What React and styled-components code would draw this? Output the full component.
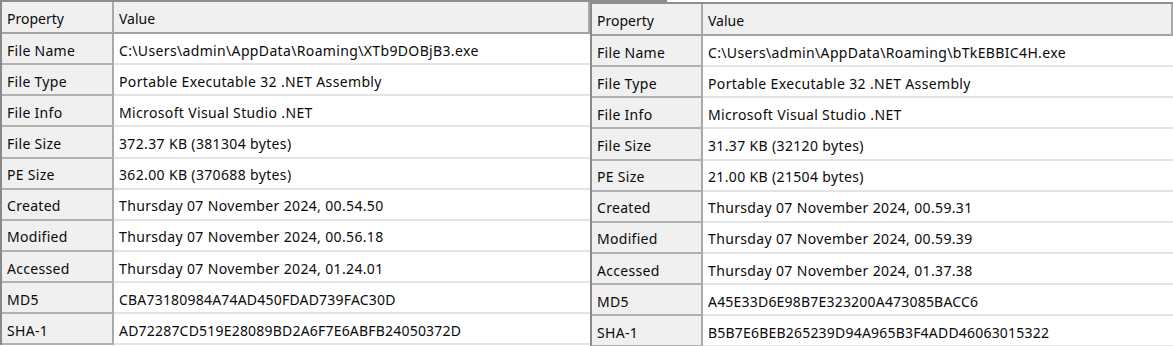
import React from "react";
import styled, { createGlobalStyle } from "styled-components";

const Global = createGlobalStyle`
  html, body { margin: 0; padding: 0; background: #ffffff; }
  body { width: 1173px; height: 346px; overflow: hidden; }
`;

const Page = styled.div`
  width: 1173px;
  height: 346px;
  display: flex;
  flex-direction: column;
  font-family: "Noto Sans", "Open Sans", sans-serif;
  font-size: 14px;
  letter-spacing: 0.3px;
  color: #0a0a0a;
`;

const TopEdge = styled.div`
  width: 667px;
  height: 2px;
  flex: none;
  background: #8e8e8e;
`;

const Panels = styled.div`
  display: flex;
  align-items: flex-start;
  margin-top: -2px;
`;

const Panel = styled.div`
  width: ${(p) => p.$width}px;
  flex: none;
  margin-top: ${(p) => p.$offset}px;
  border-top: 2px solid #8e8e8e;
  border-left: 2px solid #8a8a8a;
  box-sizing: border-box;
  display: grid;
  grid-template-columns: ${(p) => p.$propWidth}px 1fr;
`;

const HeadCell = styled.div`
  height: 32px;
  box-sizing: border-box;
  background: #f0f0f0;
  border-bottom: 2px solid #a3a3a3;
  border-right: 2px solid #a9a9a9;
  display: flex;
  align-items: center;
  padding: 2px 0 0 5px;
  letter-spacing: 0;
  white-space: nowrap;
`;

const PropCell = styled.div`
  height: 31.15px;
  box-sizing: border-box;
  background: #f0f0f0;
  border-bottom: 2px solid #b0b0b0;
  border-right: 2px solid #a9a9a9;
  display: flex;
  align-items: center;
  padding: 3px 0 0 5px;
  white-space: nowrap;
`;

const ValueCell = styled.div`
  height: 31.15px;
  box-sizing: border-box;
  background: #ffffff;
  border-bottom: 2px solid #e4e4e4;
  display: flex;
  align-items: center;
  padding: 3px 0 0 5px;
  white-space: nowrap;
  overflow: hidden;
  letter-spacing: ${(p) => (p.$hash ? "0.2px" : "0.35px")};
`;

const left = [
  ["File Name", "C:\\Users\\admin\\AppData\\Roaming\\XTb9DOBjB3.exe"],
  ["File Type", "Portable Executable 32 .NET Assembly"],
  ["File Info", "Microsoft Visual Studio .NET"],
  ["File Size", "372.37 KB (381304 bytes)"],
  ["PE Size", "362.00 KB (370688 bytes)"],
  ["Created", "Thursday 07 November 2024, 00.54.50"],
  ["Modified", "Thursday 07 November 2024, 00.56.18"],
  ["Accessed", "Thursday 07 November 2024, 01.24.01"],
  ["MD5", "CBA73180984A74AD450FDAD739FAC30D", true],
  ["SHA-1", "AD72287CD519E28089BD2A6F7E6ABFB24050372D", true],
];

const right = [
  ["File Name", "C:\\Users\\admin\\AppData\\Roaming\\bTkEBBIC4H.exe"],
  ["File Type", "Portable Executable 32 .NET Assembly"],
  ["File Info", "Microsoft Visual Studio .NET"],
  ["File Size", "31.37 KB (32120 bytes)"],
  ["PE Size", "21.00 KB (21504 bytes)"],
  ["Created", "Thursday 07 November 2024, 00.59.31"],
  ["Modified", "Thursday 07 November 2024, 00.59.39"],
  ["Accessed", "Thursday 07 November 2024, 01.37.38"],
  ["MD5", "A45E33D6E98B7E323200A473085BACC6", true],
  ["SHA-1", "B5B7E6BEB265239D94A965B3F4ADD46063015322", true],
];

function PropertyTable({ rows, width, propWidth, offset }) {
  return (
    <Panel $width={width} $propWidth={propWidth} $offset={offset}>
      <HeadCell>Property</HeadCell>
      <HeadCell>Value</HeadCell>
      {rows.map(([k, v, hash]) => (
        <React.Fragment key={k}>
          <PropCell>{k}</PropCell>
          <ValueCell $hash={hash}>{v}</ValueCell>
        </React.Fragment>
      ))}
    </Panel>
  );
}

export default function App() {
  return (
    <Page>
      <Global />
      <TopEdge />
      <Panels>
        <PropertyTable rows={left} width={590} propWidth={112} offset={0} />
        <PropertyTable rows={right} width={583} propWidth={111} offset={2} />
      </Panels>
    </Page>
  );
}
